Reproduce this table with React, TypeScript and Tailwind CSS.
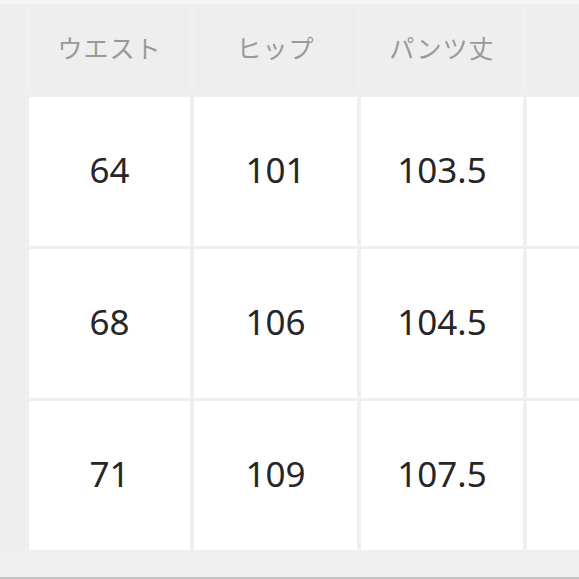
import React from 'react'

const headers = ['ウエスト', 'ヒップ', 'パンツ丈']
const rows = [
  ['64', '101', '103.5'],
  ['68', '106', '104.5'],
  ['71', '109', '107.5'],
]

export default function App() {
  return (
    <div
      className="w-[579px] h-[579px] overflow-hidden bg-[#efefef] flex flex-col"
      style={{ fontFamily: '"Noto Sans CJK JP", "Noto Sans", sans-serif' }}
    >
      <div className="h-[4px] bg-[#f5f5f5]" />

      {/* header row */}
      <div className="grid grid-cols-[25px_161px_163px_162px_1fr] gap-x-[4px] h-[89px] bg-[#f0f0f0]">
        <div className="bg-[#eeeeee]" />
        {headers.map((h) => (
          <div key={h} className="bg-[#eeeeee] flex items-center justify-center pb-[2px] text-[25px] text-[#999999] tracking-[1px]">
            {h}
          </div>
        ))}
        <div className="bg-[#eeeeee]" />
      </div>

      {/* body */}
      <div className="mt-[4px] flex flex-col gap-y-[3px]">
        {rows.map((r, i) => (
          <div key={i} className="grid grid-cols-[25px_161px_163px_162px_1fr] gap-x-[4px] h-[149px]">
            <div className="bg-[#eeeeee]" />
            {r.map((v, j) => (
              <div
                key={j}
                className="bg-white flex items-center justify-center pb-[4px] text-[35px] text-[#262626] leading-none"
                style={{ fontFamily: '"Noto Sans", "Open Sans", sans-serif' }}
              >
                {v}
              </div>
            ))}
            <div className="bg-white" />
          </div>
        ))}
      </div>

      <div className="flex-1" />
      <div className="h-[2px] bg-[#c4c4c4]" />
    </div>
  )
}
